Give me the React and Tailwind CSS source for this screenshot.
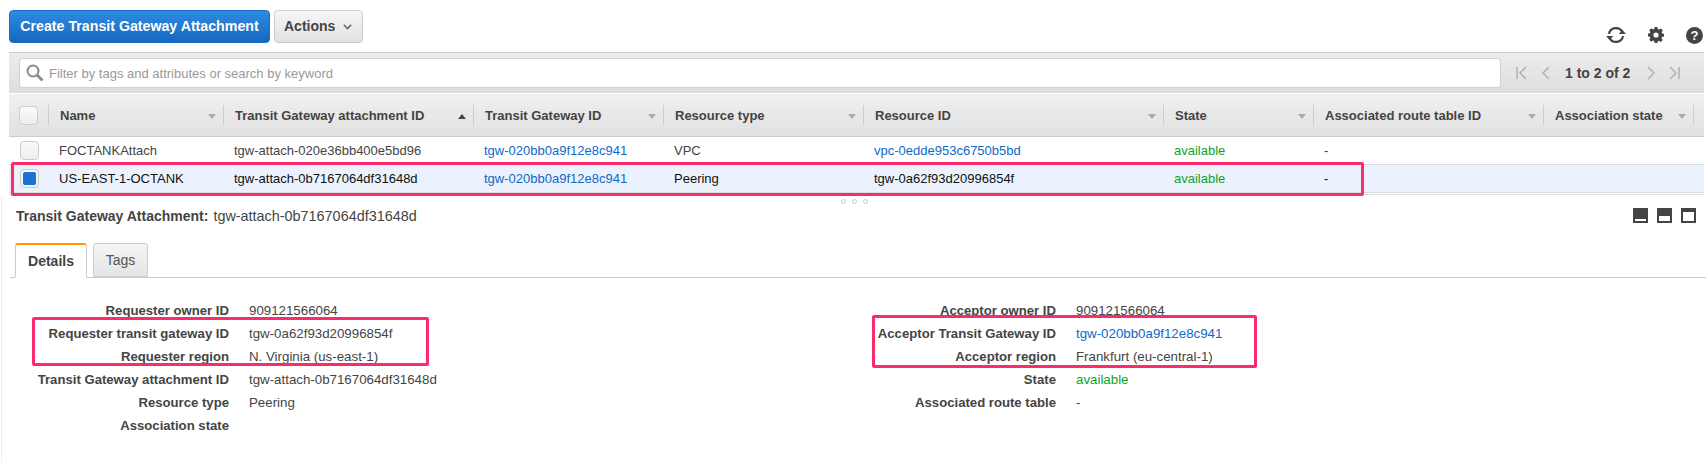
import React from "react";

const cols = [
  { w: "w-[175px]", name: "Name" },
  { w: "w-[250px]", name: "Transit Gateway attachment ID", asc: true },
  { w: "w-[190px]", name: "Transit Gateway ID" },
  { w: "w-[200px]", name: "Resource type" },
  { w: "w-[300px]", name: "Resource ID" },
  { w: "w-[150px]", name: "State" },
  { w: "w-[230px]", name: "Associated route table ID" },
  { w: "w-[150px]", name: "Association state" },
];

const Link = ({ children }) => <span className="text-[#0f69c8]">{children}</span>;
const Ok = ({ children }) => <span className="text-[#0ba42e]">{children}</span>;

const rows = [
  {
    selected: false,
    cells: [
      "FOCTANKAttach",
      "tgw-attach-020e36bb400e5bd96",
      <Link>tgw-020bb0a9f12e8c941</Link>,
      "VPC",
      <Link>vpc-0edde953c6750b5bd</Link>,
      <Ok>available</Ok>,
      "-",
      "",
    ],
  },
  {
    selected: true,
    cells: [
      "US-EAST-1-OCTANK",
      "tgw-attach-0b7167064df31648d",
      <Link>tgw-020bb0a9f12e8c941</Link>,
      "Peering",
      "tgw-0a62f93d20996854f",
      <Ok>available</Ok>,
      "-",
      "",
    ],
  },
];

const left = [
  ["Requester owner ID", "909121566064"],
  ["Requester transit gateway ID", "tgw-0a62f93d20996854f"],
  ["Requester region", "N. Virginia (us-east-1)"],
  ["Transit Gateway attachment ID", "tgw-attach-0b7167064df31648d"],
  ["Resource type", "Peering"],
  ["Association state", ""],
];
const right = [
  ["Acceptor owner ID", "909121566064"],
  ["Acceptor Transit Gateway ID", <Link>tgw-020bb0a9f12e8c941</Link>],
  ["Acceptor region", "Frankfurt (eu-central-1)"],
  ["State", <Ok>available</Ok>],
  ["Associated route table", "-"],
];

function Caret({ up }) {
  return (
    <svg width="8" height="5" viewBox="0 0 8 5" className="shrink-0">
      <path d={up ? "M4 0 8 5H0Z" : "M0 0H8L4 5Z"} fill={up ? "#444" : "#aaa"} />
    </svg>
  );
}

function Check({ selected }) {
  return (
    <div className="w-[19px] h-[19px] rounded-[4px] border border-[#ccc] bg-gradient-to-b from-[#fafafa] to-[#eee] flex items-center justify-center">
      {selected && <div className="w-[13px] h-[13px] rounded-[2px] bg-[#1a73d2]" />}
    </div>
  );
}

function Pager({ d }) {
  return (
    <svg width="12" height="14" viewBox="0 0 12 14" fill="none" stroke="#b4b4b4" strokeWidth="1.6">
      <path d={d} />
    </svg>
  );
}

function PanelIcon({ kind }) {
  const inner = {
    a: "left-[2px] right-[2px] bottom-[2px] h-[2px]",
    b: "left-[2px] right-[2px] bottom-[2px] h-[5px]",
    c: "left-[2px] right-[2px] bottom-[2px] h-[9px]",
  }[kind];
  return (
    <div className="relative w-[15px] h-[15px] bg-[#444]">
      <div className={`absolute bg-white ${inner}`} />
    </div>
  );
}

function Detail({ items }) {
  return (
    <div className="w-[827px] flex flex-col">
      {items.map(([k, v]) => (
        <div key={k} className="flex h-[23px] items-center">
          <div className="w-[229px] text-right font-bold text-[#444] text-[13.15px]">{k}</div>
          <div className="ml-[20px] text-[#444] text-[13.3px]">{v}</div>
        </div>
      ))}
    </div>
  );
}

export default function App() {
  return (
    <div className="w-[1706px] h-[463px] overflow-hidden bg-white text-[13px] text-[#444] font-['Liberation_Sans',Arial,sans-serif]">
      <div className="h-[52px] flex pl-[9px] pt-[10px] relative">
        <button className="h-[33px] w-[261px] rounded-[4px] border border-[#1a6cc5] bg-gradient-to-b from-[#2f8be2] to-[#1667bf] text-white font-bold text-[14.2px]">
          Create Transit Gateway Attachment
        </button>
        <button className="ml-[4px] h-[33px] w-[89px] rounded-[4px] border border-[#ccc] bg-gradient-to-b from-[#f6f6f6] to-[#e2e2e2] text-[#444] font-bold text-[14px] flex items-center pl-[9px]">
          Actions
          <svg width="9" height="6" viewBox="0 0 9 6" fill="none" stroke="#666" strokeWidth="1.5" className="ml-[8px]">
            <path d="M.8.8 4.5 4.6 8.2.8" />
          </svg>
        </button>
        <div className="ml-auto flex items-center h-[24px] mt-[13px] pr-[3px]">
          <svg width="22" height="20" viewBox="0 0 20 18" fill="none" stroke="#444" strokeWidth="2">
            <path d="M3.6 8A6.5 6.5 0 0 1 15.8 6.3" />
            <path d="M16.4 10A6.5 6.5 0 0 1 4.2 11.7" />
            <path d="M12.4 7.2H19L15.9 3.4Z" fill="#444" stroke="none" transform="translate(0 1)" />
            <path d="M7.6 10.8H1L4.1 14.6Z" fill="#444" stroke="none" transform="translate(0 -1)" />
          </svg>
          <svg width="16" height="16" viewBox="0 0 16 16" className="ml-[21px]" fill="#444">
            <path fillRule="evenodd" d="M6.6 0h2.8l.4 2.1 1.2.5L12.8 1.4l2 2-1.2 1.8.5 1.2 1.9.4v2.8l-2 .4-.5 1.2 1.2 1.8-2 2-1.8-1.2-1.2.5-.3 1.7H6.6l-.4-1.9-1.2-.5-1.8 1.2-2-2 1.2-1.8-.5-1.2L0 9.4V6.6l1.9-.4.5-1.2-1.2-1.8 2-2 1.8 1.2 1.2-.5ZM8 5.4a2.6 2.6 0 1 0 0 5.2 2.6 2.6 0 0 0 0-5.2Z" />
          </svg>
          <div className="ml-[22px] w-[17px] h-[17px] rounded-full bg-[#444] text-white font-bold text-[13px] leading-[17px] text-center">?</div>
        </div>
      </div>

      <div className="ml-[9px] mr-[2px]">
        <div className="h-[41px] border-t border-[#ccc] bg-gradient-to-b from-[#ececec] to-[#dedede] flex items-center pl-[10px] pr-[24px]">
          <div className="w-[1488px] h-[30px] rounded-[4px] border border-[#d0d0d0] bg-white flex items-center pl-[6px]">
            <svg width="18" height="18" viewBox="0 0 18 18" fill="none" stroke="#8a8a8a">
              <circle cx="7" cy="7" r="5.5" strokeWidth="2" />
              <path d="M11 11 16.5 16.5" strokeWidth="2.8" />
            </svg>
            <span className="ml-[5px] text-[#999] translate-y-[1px]">Filter by tags and attributes or search by keyword</span>
          </div>
          <div className="ml-[15px] flex items-center">
            <Pager d="M1 1V13M10 1 4 7 10 13" />
            <div className="ml-[12px]"><Pager d="M9 1 3 7 9 13" /></div>
            <span className="ml-[13px] w-[66px] font-bold text-[14px] whitespace-nowrap">1 to 2 of 2</span>
            <div className="ml-[14px]"><Pager d="M3 1 9 7 3 13" /></div>
            <div className="ml-[11px]"><Pager d="M2 1 8 7 2 13M11 1V13" /></div>
          </div>
        </div>

        <div className="mt-[1px] h-[43px] border-b border-[#ccc] bg-gradient-to-b from-[#f0f0f0] to-[#e1e1e1] flex items-center">
          <div className="w-[40px] flex items-center">
            <div className="ml-[10px]"><Check /></div>
            <div className="ml-[10px] h-[20px] border-r border-[#ccc]" />
          </div>
          {cols.map((c) => (
            <div key={c.name} className={`${c.w} h-[20px] pt-[2px] border-r border-[#ccc] flex items-center justify-between pl-[11px] pr-[7px] font-bold whitespace-nowrap`}>
              {c.name}
              <Caret up={c.asc} />
            </div>
          ))}
        </div>

        <div className="relative pb-[1px] border-b border-[#ddd]">
          {rows.map((r, i) => (
            <div
              key={i}
              className={`flex items-center h-[28px] border-b border-[#d8dde2] whitespace-nowrap ${r.selected ? "bg-[#ebf1fd] text-[#111]" : "bg-white text-[#444]"}`}
            >
              <div className="w-[40px] pl-[11px]"><Check selected={r.selected} /></div>
              {cols.map((c, j) => (
                <div key={c.name} className={`${c.w} pl-[10px]`}>{r.cells[j]}</div>
              ))}
            </div>
          ))}
          <div className="absolute left-[2px] top-[25px] w-[1353px] h-[34px] border-[3px] border-[#fb2c6c] rounded-[2px]" />
        </div>
      </div>

      <div className="ml-[1px] border-l border-[#eee] h-[268px] relative">
        <div className="flex items-center justify-center gap-[6px] h-[8px] mt-[2px]">
          <div className="w-[5px] h-[5px] rounded-full border border-[#ccc]" />
          <div className="w-[5px] h-[5px] rounded-full border border-[#ccc]" />
          <div className="w-[5px] h-[5px] rounded-full border border-[#ccc]" />
        </div>
        <div className="flex items-center h-[20px] pt-[1px] mt-[1px] pl-[14px] pr-[10px] text-[14px]">
          <span className="font-bold">Transit Gateway Attachment:</span>
          <span className="ml-[5px] text-[14.4px]">tgw-attach-0b7167064df31648d</span>
          <div className="ml-auto flex gap-[9px] -translate-y-[1px]">
            <PanelIcon kind="a" />
            <PanelIcon kind="b" />
            <PanelIcon kind="c" />
          </div>
        </div>
        <div className="mt-[18px] ml-[8px] h-[34px] border-b border-[#ccc] flex items-end pl-[5px] text-[14px]">
          <div className="w-[72px] h-[35px] -mb-[1px] bg-white border border-[#ccc] border-t-2 border-t-[#f90] border-b-white rounded-t-[3px] flex items-center justify-center font-bold">Details</div>
          <div className="ml-[6px] w-[55px] h-[34px] border border-[#ccc] rounded-t-[3px] bg-gradient-to-b from-[#f6f6f6] to-[#e4e4e4] flex items-center justify-center text-[#555]">Tags</div>
        </div>
        <div className="relative flex mt-[21px] -ml-[2px]">
          <Detail items={left} />
          <Detail items={right} />
          <div className="absolute left-[32px] top-[18px] w-[397px] h-[49px] border-[3px] border-[#fb2c6c] rounded-[2px]" />
          <div className="absolute left-[872px] top-[16px] w-[385px] h-[53px] border-[3px] border-[#fb2c6c] rounded-[2px]" />
        </div>
      </div>
    </div>
  );
}
